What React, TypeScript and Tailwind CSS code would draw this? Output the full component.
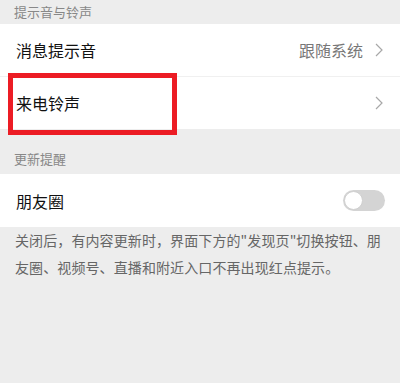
const font = { fontFamily: '"Noto Sans CJK SC", "Noto Sans", sans-serif' };

function Chevron() {
  return (
    <svg width="8" height="14" viewBox="0 0 8 14" className="shrink-0">
      <path d="M1 1l6 6-6 6" fill="none" stroke="#a8a8a8" strokeWidth="1.2" />
    </svg>
  );
}

export default function App() {
  return (
    <div className="w-[400px] h-[383px] bg-[#ededed] overflow-hidden" style={font}>
      <div className="h-[24px] px-[14px] flex items-center text-[13px] text-[#888]">提示音与铃声</div>

      <div className="bg-white">
        <div className="h-[52px] pl-[16px] pr-[17px] flex items-center justify-between">
          <span className="text-[16px] text-[#111]">消息提示音</span>
          <div className="flex items-center gap-[12px]">
            <span className="text-[16px] text-[#777]">跟随系统</span>
            <Chevron />
          </div>
        </div>
        <div className="h-px bg-[#f0f0f0]" />
        <div className="relative h-[52px] pl-[16px] pr-[17px] flex items-center justify-between">
          <span className="text-[16px] text-[#111]">来电铃声</span>
          <Chevron />
          <div className="absolute left-[8px] top-[-4px] w-[169px] h-[62px] border-[5px] border-[#ec1c24]" />
        </div>
      </div>

      <div className="h-[45px] px-[14px] pb-[6px] flex items-end text-[13px] text-[#888]">更新提醒</div>

      <div className="bg-white h-[53px] pl-[16px] pr-[15px] flex items-center justify-between">
        <span className="text-[16px] text-[#111]">朋友圈</span>
        <div className="w-[42px] h-[21px] rounded-full bg-[#d4d4d4] p-px flex items-center">
          <div className="w-[19px] h-[19px] rounded-full bg-white border border-[#cfcfcf]" />
        </div>
      </div>

      <p className="pl-[15px] pr-[12px] text-[14px] leading-[27px] tracking-[0.1px] text-[#666]">
        关闭后，有内容更新时，界面下方的"发现页"切换按钮、朋友圈、视频号、直播和附近入口不再出现红点提示。
      </p>
    </div>
  );
}
